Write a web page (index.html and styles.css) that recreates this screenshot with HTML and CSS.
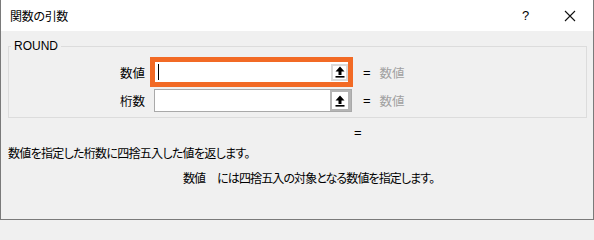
FILE: index.html
```html
<!DOCTYPE html>
<html lang="ja">
<head>
<meta charset="utf-8">
<link rel="stylesheet" href="styles.css">
</head>
<body>
<div class="window">
  <div class="titlebar">
    <span class="title">関数の引数</span>
    <span class="help">?</span>
    <span class="close"><svg width="12" height="12" viewBox="0 0 12 12"><path d="M1 1 L11 11 M11 1 L1 11" stroke="#111" stroke-width="1.1" fill="none"/></svg></span>
  </div>
  <div class="content">
    <div class="group">
      <span class="legend">ROUND</span>
      <div class="rows">
        <span class="label">数値</span>
        <div class="field focus">
          <span class="caret"></span>
          <span class="pick"><svg width="10" height="12" viewBox="0 0 10 12"><path d="M5 0.5 L9.5 5.5 H6.5 V9 H3.5 V5.5 H0.5 Z" fill="#000"/><rect x="0.5" y="10" width="9" height="1.6" fill="#000"/></svg></span>
        </div>
        <span class="eq">=</span>
        <span class="val">数値</span>

        <span class="label">桁数</span>
        <div class="field">
          <span class="pick dark"><svg width="10" height="12" viewBox="0 0 10 12"><path d="M5 0.5 L9.5 5.5 H6.5 V9 H3.5 V5.5 H0.5 Z" fill="#000"/><rect x="0.5" y="10" width="9" height="1.6" fill="#000"/></svg></span>
        </div>
        <span class="eq">=</span>
        <span class="val">数値</span>
      </div>
    </div>
    <div class="result"><span class="eq">=</span></div>
    <p class="desc">数値を指定した桁数に四捨五入した値を返します。</p>
    <p class="argdesc"><span class="argname">数値</span>には四捨五入の対象となる数値を指定します。</p>
  </div>
</div>
</body>
</html>
```
FILE: styles.css
```css
html, body {
  margin: 0;
  padding: 0;
  background: #f0f0f0;
}
body {
  font-family: "Noto Sans CJK JP", "Noto Sans", sans-serif;
  font-size: 12px;
  color: #000;
  font-feature-settings: "palt";
}
.window {
  width: 594px;
  height: 220px;
  box-sizing: border-box;
  border: 1px solid #7a7a7a;
  border-top: none;
  background: #f0f0f0;
  overflow: hidden;
}
.titlebar {
  height: 31px;
  background: #fff;
  display: flex;
  align-items: center;
  padding-left: 9px;
}
.title {
  flex: 1;
  font-size: 12px;
  letter-spacing: -0.3px;
  color: #000;
}
.help {
  font-family: "Liberation Sans", sans-serif;
  font-size: 13px;
  width: 12px;
  margin-right: 30px;
}
.close {
  display: flex;
  margin-right: 17px;
}
.content {
  padding: 15px 6px 0 7px;
}
.group {
  position: relative;
  border: 1px solid #dcdcdc;
  height: 72px;
  box-sizing: border-box;
  padding-top: 14px;
}
.legend {
  position: absolute;
  top: -9px;
  left: 2px;
  padding: 0 3px;
  background: #f0f0f0;
  font-family: "Liberation Sans", sans-serif;
  font-size: 12px;
  line-height: 16px;
}
.rows {
  display: grid;
  grid-template-columns: 136px 198px auto 1fr;
  grid-auto-rows: 23px;
  row-gap: 5px;
  column-gap: 0;
  align-items: center;
  justify-items: start;
}
.label {
  justify-self: stretch;
  text-align: right;
  font-size: 12.5px;
}
.field {
  justify-self: stretch;
  height: 23px;
  box-sizing: border-box;
  margin-left: 9px;
  margin-right: -9px;
  border: 1px solid #a9a9a9;
  background: #fff;
  display: flex;
  align-items: center;
  justify-content: flex-end;
}
.field.focus {
  border: 5px solid #f26a25;
  height: 30px;
  margin-left: 5px;
  margin-right: -10px;
  margin-top: -4px;
  margin-bottom: -3px;
  justify-content: space-between;
}
.caret {
  width: 1px;
  height: 16px;
  background: #000;
  margin-left: 3px;
}
.pick {
  width: 17px;
  height: 17px;
  box-sizing: border-box;
  border: 2px solid #dadada;
  background: #fff;
  display: flex;
  align-items: center;
  justify-content: center;
}
.pick.dark {
  width: 21px;
  height: 21px;
  border: 2px solid #b5b5b5;
  border-right-width: 3px;
}
.eq {
  font-family: "Liberation Sans", sans-serif;
  font-size: 13px;
  padding-left: 20px;
  padding-right: 9px;
}
.val {
  color: #a0a0a0;
  font-size: 12.5px;
}
.result {
  height: 20px;
  display: flex;
  align-items: center;
  padding-left: 346px;
  margin-top: 4px;
}
.result .eq {
  padding: 0;
}
.desc {
  margin: 3px 0 0 0;
  line-height: 16px;
  font-size: 12px;
  letter-spacing: -0.7px;
}
.argdesc {
  margin: 9px 0 0 175px;
  line-height: 16px;
  font-size: 12px;
  letter-spacing: -0.9px;
}
.argname {
  margin-right: 12px;
}
```
